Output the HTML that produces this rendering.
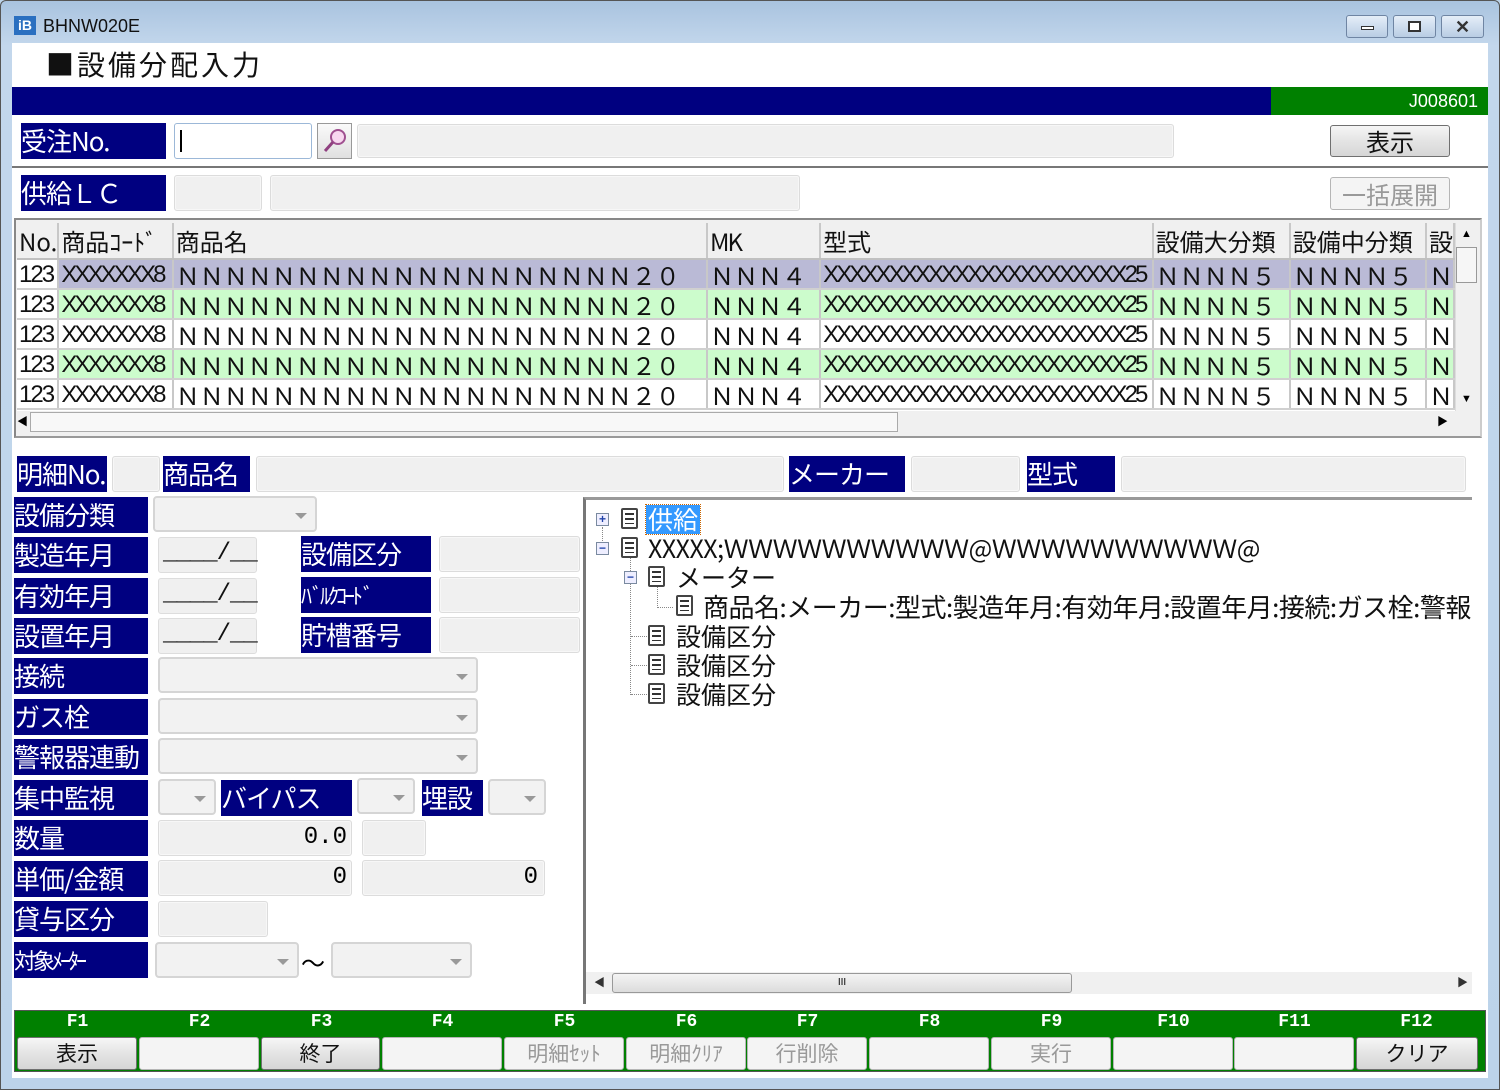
<!DOCTYPE html>
<html><head><meta charset="utf-8">
<style>
*{box-sizing:border-box;margin:0;padding:0}
body{width:1500px;height:1090px;overflow:hidden;background:#bcd3ea;font-family:"Liberation Sans","Noto Sans CJK JP",sans-serif;position:relative}
.a{position:absolute}
.win{left:0;top:0;width:1500px;height:1090px;background:linear-gradient(#a9c3df,#c3d7ec 45px,#bcd3ea);border:1px solid #555;border-radius:6px 6px 0 0}
.client{left:12px;top:43px;width:1476px;height:1035px;background:#fff}
.lb{position:absolute;background:#000080;color:#fff;font-size:26px;line-height:36px;height:36px;white-space:nowrap;overflow:hidden;font-family:"Noto Sans CJK JP",sans-serif;letter-spacing:-1px}
.fd{position:absolute;background:#f0f0f0;border:1px solid #dcdcdc;border-radius:3px;height:36px;box-shadow:inset 0 0 0 1px #f7f7f7}
.cb{position:absolute;background:#f2f2f2;border:2px solid #d5d5d5;border-radius:4px;height:36px}
.cb::after{content:"";position:absolute;right:8px;top:15px;border-left:6px solid transparent;border-right:6px solid transparent;border-top:6px solid #999}
.btn{position:absolute;border:1px solid #707070;border-radius:3px;background:linear-gradient(#f6f6f6,#e4e4e4 50%,#d6d6d6);font-size:24px;text-align:center;font-family:"Noto Sans CJK JP",sans-serif;color:#111}
.btn.dis{border-color:#b5b5b5;background:#f4f4f4;color:#999}
.dt{position:absolute;background:#f0f0f0;border:1px solid #ddd;border-radius:3px;height:36px;font-size:24px;line-height:32px;padding-left:4px;color:#111;font-family:"Liberation Mono",monospace;letter-spacing:-1px}
.gw{position:absolute;left:17px;top:223px;width:1438px;height:188px;overflow:hidden;background:#fff}
.g{border-collapse:collapse;table-layout:fixed}
.g td{border-right:2px solid #c8c8c8;border-bottom:2px solid #d0d0d0;white-space:nowrap;overflow:hidden;font-size:24px;height:30px;line-height:27px;padding:0 0 0 2px;color:#111}
.g tr.hd td{background:#f0f0f0;height:36px;line-height:33px;font-family:"Noto Sans CJK JP",sans-serif;font-size:24px;border-bottom:2px solid #c0c0c0}
.nn{font-family:"Noto Sans CJK JP",sans-serif;font-size:24.4px}
.xx{letter-spacing:-2.9px;font-size:24px}
.r1 td{background:#babad6}.r2 td{background:#ccfccc}.r3 td{background:#fff}
td.no{background:#fff!important;letter-spacing:-2px}
.ti{position:absolute;font-size:25px;white-space:nowrap;font-family:"Noto Sans CJK JP",sans-serif;color:#111;line-height:29px}
.ic{position:absolute;width:17px;height:21px;border:2px solid #444;border-radius:2px;background:repeating-linear-gradient(#fff 0 3px,#333 3px 5px);background-clip:content-box;padding:3px 2px;background-color:#fff}
.pm{position:absolute;width:13px;height:13px;border:1px solid #7a8aa0;background:#eef;font-size:12px;line-height:10px;text-align:center;color:#24a;font-weight:bold}
.fk{position:absolute;top:1012px;color:#fff;font-size:18px;font-weight:bold;width:121px;text-align:center;font-family:"Liberation Mono",monospace}
</style></head><body>
<div class="a win"></div>
<div class="a" style="left:14px;top:16px;width:22px;height:19px;background:#2a6fc0;color:#fff;font-size:14px;font-weight:bold;line-height:19px;text-align:center">iB</div>
<div class="a" style="left:43px;top:16px;font-size:18px;color:#111">BHNW020E</div>
<div class="a" style="left:1346px;top:15px;width:42px;height:23px;border:1px solid #6f85a3;border-radius:3px;background:linear-gradient(#e5eef8,#b9cde4)"><div class="a" style="left:14px;top:10px;width:13px;height:4px;border:1px solid #333;background:#fff"></div></div>
<div class="a" style="left:1393px;top:15px;width:43px;height:23px;border:1px solid #6f85a3;border-radius:3px;background:linear-gradient(#e5eef8,#b9cde4)"><div class="a" style="left:14px;top:5px;width:13px;height:11px;border:2px solid #333;background:#fff"></div></div>
<div class="a" style="left:1441px;top:15px;width:43px;height:23px;border:1px solid #6f85a3;border-radius:3px;background:linear-gradient(#e5eef8,#b9cde4);font-size:18px;text-align:center;line-height:22px;color:#333;font-weight:bold">✕</div>
<div class="a client"></div>
<div class="a" style="left:46px;top:44px;font-size:28px;font-family:'Noto Sans CJK JP',sans-serif;color:#111;letter-spacing:3px">■設備分配入力</div>
<div class="a" style="left:12px;top:87px;width:1260px;height:28px;background:#000080"></div>
<div class="a" style="left:1271px;top:87px;width:217px;height:28px;background:#008000;color:#fff;font-size:18px;text-align:right;line-height:28px;padding-right:10px">J008601</div>

<div class="lb" style="left:21px;top:123px;width:145px">受注No.</div>
<div class="a" style="left:174px;top:123px;width:138px;height:36px;border:1px solid #9cb8d8;border-radius:3px;background:#fff"><div class="a" style="left:5px;top:6px;width:2px;height:22px;background:#000"></div></div>
<div class="a" style="left:317px;top:123px;width:35px;height:36px;border:1px solid #999;background:linear-gradient(#fafafa,#e0e0e0)"><svg width="33" height="34"><circle cx="20" cy="13" r="7" fill="#f8d8f0" stroke="#a05090" stroke-width="2"/><line x1="15" y1="18" x2="7" y2="27" stroke="#904080" stroke-width="3"/></svg></div>
<div class="fd" style="left:357px;top:124px;width:817px;height:34px"></div>
<div class="btn" style="left:1330px;top:125px;width:120px;height:32px;line-height:30px">表示</div>
<div class="a" style="left:12px;top:166px;width:1476px;height:2px;background:#777"></div>
<div class="lb" style="left:21px;top:175px;width:145px">供給ＬＣ</div>
<div class="fd" style="left:174px;top:175px;width:88px"></div>
<div class="fd" style="left:270px;top:175px;width:530px"></div>
<div class="btn dis" style="left:1330px;top:177px;width:120px;height:33px;line-height:31px">一括展開</div>

<div class="a" style="left:14px;top:218px;width:1468px;height:220px;border:2px solid #888;border-right-color:#ccc;border-bottom-color:#999;background:#f0f0f0"></div>
<div class="gw">
<table class="g">
<colgroup><col style="width:38px"><col style="width:115px"><col style="width:536px"><col style="width:114px"><col style="width:333px"><col style="width:138px"><col style="width:137px"><col style="width:27px"></colgroup>
<tr class="hd"><td>No.</td><td>商品ｺｰﾄﾞ</td><td>商品名</td><td style="letter-spacing:-2px">MK</td><td>型式</td><td>設備大分類</td><td>設備中分類</td><td>設</td></tr>
<tr class="r1"><td class="no">123</td><td class="xx">XXXXXXX8</td><td class="nn">ＮＮＮＮＮＮＮＮＮＮＮＮＮＮＮＮＮＮＮ２０</td><td class="nn">ＮＮＮ４</td><td class="xx">XXXXXXXXXXXXXXXXXXXXXXX25</td><td class="nn">ＮＮＮＮ５</td><td class="nn">ＮＮＮＮ５</td><td class="nn">Ｎ</td></tr>
<tr class="r2"><td class="no">123</td><td class="xx">XXXXXXX8</td><td class="nn">ＮＮＮＮＮＮＮＮＮＮＮＮＮＮＮＮＮＮＮ２０</td><td class="nn">ＮＮＮ４</td><td class="xx">XXXXXXXXXXXXXXXXXXXXXXX25</td><td class="nn">ＮＮＮＮ５</td><td class="nn">ＮＮＮＮ５</td><td class="nn">Ｎ</td></tr>
<tr class="r3"><td class="no">123</td><td class="xx">XXXXXXX8</td><td class="nn">ＮＮＮＮＮＮＮＮＮＮＮＮＮＮＮＮＮＮＮ２０</td><td class="nn">ＮＮＮ４</td><td class="xx">XXXXXXXXXXXXXXXXXXXXXXX25</td><td class="nn">ＮＮＮＮ５</td><td class="nn">ＮＮＮＮ５</td><td class="nn">Ｎ</td></tr>
<tr class="r2"><td class="no">123</td><td class="xx">XXXXXXX8</td><td class="nn">ＮＮＮＮＮＮＮＮＮＮＮＮＮＮＮＮＮＮＮ２０</td><td class="nn">ＮＮＮ４</td><td class="xx">XXXXXXXXXXXXXXXXXXXXXXX25</td><td class="nn">ＮＮＮＮ５</td><td class="nn">ＮＮＮＮ５</td><td class="nn">Ｎ</td></tr>
<tr class="r3"><td class="no">123</td><td class="xx">XXXXXXX8</td><td class="nn">ＮＮＮＮＮＮＮＮＮＮＮＮＮＮＮＮＮＮＮ２０</td><td class="nn">ＮＮＮ４</td><td class="xx">XXXXXXXXXXXXXXXXXXXXXXX25</td><td class="nn">ＮＮＮＮ５</td><td class="nn">ＮＮＮＮ５</td><td class="nn">Ｎ</td></tr>
</table>
</div>
<div class="a" style="left:1455px;top:223px;width:23px;height:188px;background:#f0f0f0;border-left:1px solid #ddd"></div>
<div class="a" style="left:1455px;top:223px;width:23px;height:23px;font-size:11px;text-align:center;line-height:22px">▲</div>
<div class="a" style="left:1456px;top:247px;width:21px;height:36px;border:1px solid #999;background:#f6f6f6"></div>
<div class="a" style="left:1455px;top:388px;width:23px;height:23px;font-size:11px;text-align:center;line-height:22px">▼</div>
<div class="a" style="left:17px;top:411px;width:1438px;height:22px;background:#f0f0f0"></div>
<div class="a" style="left:17px;top:413px;font-size:11px">◀</div>
<div class="a" style="left:30px;top:412px;width:868px;height:20px;border:1px solid #aaa;background:#f8f8f8"></div>
<div class="a" style="left:1437px;top:413px;font-size:11px">▶</div>

<div class="lb" style="left:17px;top:456px;width:90px">明細No.</div>
<div class="fd" style="left:112px;top:456px;width:48px"></div>
<div class="lb" style="left:163px;top:456px;width:87px">商品名</div>
<div class="fd" style="left:256px;top:456px;width:528px"></div>
<div class="lb" style="left:789px;top:456px;width:116px">メーカー</div>
<div class="fd" style="left:911px;top:456px;width:109px"></div>
<div class="lb" style="left:1027px;top:456px;width:88px">型式</div>
<div class="fd" style="left:1121px;top:456px;width:345px"></div>

<div class="lb" style="left:14px;top:497px;width:134px">設備分類</div>
<div class="cb" style="left:153px;top:496px;width:164px"></div>
<div class="lb" style="left:14px;top:537px;width:134px">製造年月</div>
<div class="dt" style="left:158px;top:537px;width:99px">____/__</div>
<div class="lb" style="left:14px;top:578px;width:134px">有効年月</div>
<div class="dt" style="left:158px;top:578px;width:99px">____/__</div>
<div class="lb" style="left:14px;top:618px;width:134px">設置年月</div>
<div class="dt" style="left:158px;top:618px;width:99px">____/__</div>
<div class="lb" style="left:301px;top:536px;width:130px">設備区分</div>
<div class="fd" style="left:439px;top:536px;width:141px"></div>
<div class="lb" style="left:301px;top:577px;width:130px;font-size:22px;letter-spacing:-3px">ﾊﾞﾙｸｺｰﾄﾞ</div>
<div class="fd" style="left:439px;top:577px;width:141px"></div>
<div class="lb" style="left:301px;top:617px;width:130px">貯槽番号</div>
<div class="fd" style="left:439px;top:617px;width:141px"></div>
<div class="lb" style="left:14px;top:658px;width:134px">接続</div>
<div class="cb" style="left:158px;top:657px;width:320px"></div>
<div class="lb" style="left:14px;top:699px;width:134px">ガス栓</div>
<div class="cb" style="left:158px;top:698px;width:320px"></div>
<div class="lb" style="left:14px;top:739px;width:134px">警報器連動</div>
<div class="cb" style="left:158px;top:738px;width:320px"></div>
<div class="lb" style="left:14px;top:780px;width:134px">集中監視</div>
<div class="cb" style="left:158px;top:779px;width:58px"></div>
<div class="lb" style="left:221px;top:780px;width:131px">バイパス</div>
<div class="cb" style="left:357px;top:778px;width:58px"></div>
<div class="lb" style="left:422px;top:780px;width:61px">埋設</div>
<div class="cb" style="left:488px;top:779px;width:58px"></div>
<div class="lb" style="left:14px;top:820px;width:134px">数量</div>
<div class="fd" style="left:158px;top:820px;width:194px;font-size:24px;text-align:right;line-height:34px;padding-right:4px;font-family:'Liberation Mono',monospace">0.0</div>
<div class="fd" style="left:362px;top:820px;width:64px"></div>
<div class="lb" style="left:14px;top:861px;width:134px">単価/金額</div>
<div class="fd" style="left:158px;top:860px;width:194px;font-size:24px;text-align:right;line-height:34px;padding-right:4px;font-family:'Liberation Mono',monospace">0</div>
<div class="fd" style="left:362px;top:860px;width:183px;font-size:24px;text-align:right;line-height:34px;padding-right:6px;font-family:'Liberation Mono',monospace">0</div>
<div class="lb" style="left:14px;top:901px;width:134px">貸与区分</div>
<div class="fd" style="left:158px;top:901px;width:110px"></div>
<div class="lb" style="left:14px;top:942px;width:134px;font-size:22px;letter-spacing:-3px">対象ﾒｰﾀｰ</div>
<div class="cb" style="left:155px;top:942px;width:144px"></div>
<div class="a" style="left:301px;top:944px;font-size:24px">〜</div>
<div class="cb" style="left:331px;top:942px;width:141px"></div>

<div class="a" style="left:583px;top:497px;width:889px;height:507px;border-left:3px solid #777;border-top:3px solid #999;background:#fff"></div>
<div class="a" style="left:586px;top:972px;width:886px;height:22px;background:#f0f0f0"></div>
<div class="a" style="left:594px;top:974px;font-size:11px;color:#333">◀</div>
<div class="a" style="left:612px;top:973px;width:460px;height:20px;border:1px solid #999;border-radius:3px;background:linear-gradient(#f4f4f4,#dcdcdc);font-size:10px;text-align:center;line-height:18px">III</div>
<div class="a" style="left:1457px;top:974px;font-size:11px;color:#333">▶</div>

<div class="a" style="left:602px;top:527px;width:0;height:22px;border-left:1px dotted #888"></div>
<div class="a" style="left:630px;top:557px;width:0;height:138px;border-left:1px dotted #888"></div>
<div class="a" style="left:657px;top:586px;width:0;height:22px;border-left:1px dotted #888"></div>
<div class="pm" style="left:596px;top:513px">+</div><div class="ic" style="left:621px;top:508px"></div>
<div class="ti" style="left:646px;top:505px;background:#3399ff;color:#fff;outline:1px dotted #c60;padding:0 2px">供給</div>
<div class="pm" style="left:596px;top:542px">−</div><div class="ic" style="left:621px;top:537px"></div>
<div class="ti" style="left:648px;top:534px;letter-spacing:-0.5px">XXXXX;ＷＷＷＷＷＷＷＷＷＷ@ＷＷＷＷＷＷＷＷＷＷ@</div>
<div class="pm" style="left:624px;top:571px">−</div><div class="ic" style="left:648px;top:566px"></div>
<div class="ti" style="left:676px;top:563px">メーター</div>
<div class="a" style="left:657px;top:607px;width:16px;border-top:1px dotted #888"></div>
<div class="ic" style="left:676px;top:595px"></div>
<div class="ti" style="left:703px;top:592px;width:770px;overflow:hidden;font-size:26px;letter-spacing:-0.5px">商品名:メーカー:型式:製造年月:有効年月:設置年月:接続:ガス栓:警報</div>
<div class="a" style="left:631px;top:636px;width:16px;border-top:1px dotted #888"></div><div class="ic" style="left:648px;top:625px"></div><div class="ti" style="left:676px;top:622px">設備区分</div>
<div class="a" style="left:631px;top:665px;width:16px;border-top:1px dotted #888"></div><div class="ic" style="left:648px;top:654px"></div><div class="ti" style="left:676px;top:651px">設備区分</div>
<div class="a" style="left:631px;top:694px;width:16px;border-top:1px dotted #888"></div><div class="ic" style="left:648px;top:683px"></div><div class="ti" style="left:676px;top:680px">設備区分</div>

<div class="a" style="left:14px;top:1010px;width:1472px;height:62px;background:#008000;border:1px solid #555"></div>
<div class="fk" style="left:17px">F1</div><div class="fk" style="left:139px">F2</div><div class="fk" style="left:261px">F3</div><div class="fk" style="left:382px">F4</div><div class="fk" style="left:504px">F5</div><div class="fk" style="left:626px">F6</div><div class="fk" style="left:747px">F7</div><div class="fk" style="left:869px">F8</div><div class="fk" style="left:991px">F9</div><div class="fk" style="left:1113px">F10</div><div class="fk" style="left:1234px">F11</div><div class="fk" style="left:1356px">F12</div>
<div class="btn" style="left:17px;top:1037px;width:120px;height:33px;line-height:31px;font-size:21px">表示</div>
<div class="btn dis" style="left:139px;top:1037px;width:120px;height:33px"></div>
<div class="btn" style="left:261px;top:1037px;width:119px;height:33px;line-height:31px;font-size:21px">終了</div>
<div class="btn dis" style="left:382px;top:1037px;width:120px;height:33px"></div>
<div class="btn dis" style="left:504px;top:1037px;width:120px;height:33px;line-height:31px;font-size:21px">明細ｾｯﾄ</div>
<div class="btn dis" style="left:626px;top:1037px;width:120px;height:33px;line-height:31px;font-size:21px">明細ｸﾘｱ</div>
<div class="btn dis" style="left:747px;top:1037px;width:120px;height:33px;line-height:31px;font-size:21px">行削除</div>
<div class="btn dis" style="left:869px;top:1037px;width:120px;height:33px"></div>
<div class="btn dis" style="left:991px;top:1037px;width:120px;height:33px;line-height:31px;font-size:21px">実行</div>
<div class="btn dis" style="left:1113px;top:1037px;width:120px;height:33px"></div>
<div class="btn dis" style="left:1234px;top:1037px;width:120px;height:33px"></div>
<div class="btn" style="left:1356px;top:1037px;width:122px;height:33px;line-height:31px;font-size:21px">クリア</div>
</body></html>
